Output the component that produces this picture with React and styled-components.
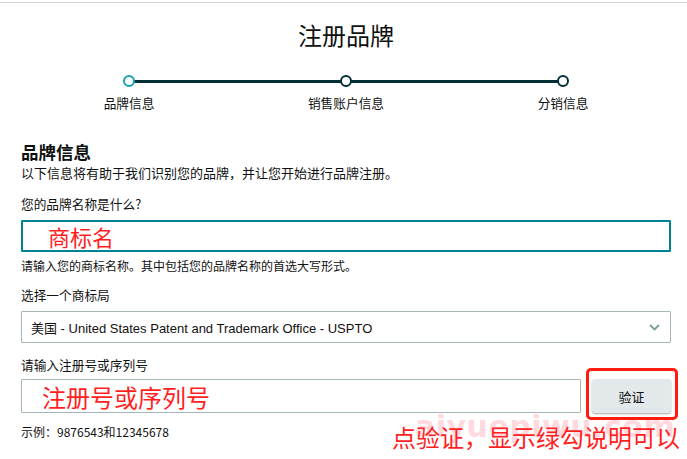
import React from 'react';
import styled, { createGlobalStyle } from 'styled-components';

const GlobalStyle = createGlobalStyle`
  body {
    margin: 0;
    background: #fff;
    font-family: "Liberation Sans", "Noto Sans CJK SC", sans-serif;
    color: #111;
  }
  * { box-sizing: border-box; }
`;

const Page = styled.div`
  margin-top: 2px;
  border-top: 1px solid #d5d5d5;
  padding: 16px 16px 0 21px;
  height: 457px;
  overflow: hidden;
`;

const Title = styled.h1`
  margin: 0;
  font-family: "Noto Sans CJK SC", sans-serif;
  font-weight: 400;
  font-size: 24px;
  line-height: 32px;
  text-align: center;
  color: #0f1111;
`;

const Stepper = styled.div`
  display: grid;
  grid-template-columns: repeat(3, 217px);
  justify-content: center;
  margin-top: 24px;
`;

const Track = styled.div`
  grid-row: 1;
  grid-column: 1 / 4;
  align-self: center;
  margin: 0 108.5px;
  height: 3px;
  background: #002f36;
`;

const Dot = styled.span`
  grid-row: 1;
  grid-column: ${p => p.$col};
  justify-self: center;
  z-index: 1;
  width: 12px;
  height: 12px;
  border-radius: 50%;
  background: #fff;
  border: 2px solid ${p => (p.$active ? '#17a2b3' : '#002f36')};
`;

const StepLabel = styled.span`
  grid-row: 2;
  grid-column: ${p => p.$col};
  justify-self: center;
  margin-top: 7px;
  font-family: "Noto Sans CJK SC", sans-serif;
  font-size: 12.7px;
  line-height: 18px;
  color: #0f1111;
`;

const Heading = styled.h2`
  margin: 28px 0 0;
  font-family: "Noto Sans CJK SC", sans-serif;
  font-weight: 700;
  font-size: 17.5px;
  line-height: 24px;
  color: #0f1111;
`;

const Text = styled.p`
  margin: ${p => p.$mt || 0}px 0 0;
  font-family: "Noto Sans CJK SC", sans-serif;
  font-size: ${p => p.$size || 12.7}px;
  line-height: 18px;
  color: #111;
`;

const Field = styled.input`
  display: block;
  width: 100%;
  margin-top: ${p => p.$mt}px;
  height: ${p => p.$h}px;
  border: ${p => (p.$focus ? '2px solid #008296' : '1px solid #a6b5b8')};
  border-radius: 1px;
  padding: 0 0 0 ${p => p.$pad}px;
  font-family: "Noto Sans CJK SC", sans-serif;
  font-size: ${p => p.$size}px;
  color: #ff1f1f;
  background: #fff;
  outline: none;
`;

const Select = styled.div`
  display: flex;
  align-items: center;
  justify-content: space-between;
  margin-top: 7px;
  height: 32px;
  border: 1px solid #a6b5b8;
  border-radius: 1px;
  padding: 0 10px 0 9px;
  font-size: 13px;
  color: #111;
  svg { display: block; }
`;

const InputRow = styled.div`
  display: flex;
  gap: 11px;
  margin-top: 5px;
  ${Field} { flex: 1; margin-top: 0; }
`;

const ButtonWrap = styled.div`
  position: relative;
  width: 79px;
`;

const Button = styled.button`
  width: 100%;
  height: 34px;
  border: none;
  border-radius: 3px;
  background: #e3e9ea;
  box-shadow: 0 1px 2px rgba(0, 0, 0, 0.35);
  font-family: "Noto Sans CJK SC", sans-serif;
  font-size: 13px;
  color: #0f1111;
`;

const Highlight = styled.span`
  position: absolute;
  left: -6px;
  right: -7px;
  top: -11px;
  bottom: -7px;
  border: 3.5px solid #ff1b10;
  border-radius: 5px;
  pointer-events: none;
`;

const Footer = styled.div`
  position: relative;
  display: flex;
  justify-content: space-between;
  align-items: flex-start;
  margin-top: 10px;
  margin-right: -9px;
`;

const Watermark = styled.span`
  position: absolute;
  left: 394px;
  top: -13px;
  font-family: "DejaVu Sans", sans-serif;
  font-weight: 700;
  font-size: 30px;
  line-height: 34px;
  letter-spacing: 0.5px;
  color: rgba(255, 120, 140, 0.3);
  pointer-events: none;
`;

const Note = styled.span`
  position: relative;
  z-index: 1;
  font-family: "Noto Sans CJK SC", sans-serif;
  font-size: 24px;
  line-height: 28px;
  color: #ff1f1f;
`;

const steps = ['品牌信息', '销售账户信息', '分销信息'];

export default function App() {
  return (
    <>
      <GlobalStyle />
      <Page>
        <Title>注册品牌</Title>

        <Stepper>
          <Track />
          {steps.map((s, i) => (
            <React.Fragment key={s}>
              <Dot $col={i + 1} $active={i === 0} />
              <StepLabel $col={i + 1}>{s}</StepLabel>
            </React.Fragment>
          ))}
        </Stepper>

        <Heading>品牌信息</Heading>
        <Text $size={13}>以下信息将有助于我们识别您的品牌，并让您开始进行品牌注册。</Text>

        <Text $mt={13}>您的品牌名称是什么?</Text>
        <Field $mt={7} $h={32} $focus $pad={25} $size={22} defaultValue="商标名" />
        <Text $mt={5} $size={12}>请输入您的商标名称。其中包括您的品牌名称的首选大写形式。</Text>

        <Text $mt={11}>选择一个商标局</Text>
        <Select>
          <span>美国 - United States Patent and Trademark Office - USPTO</span>
          <svg width="11" height="7" viewBox="0 0 11 7">
            <polyline points="1,1 5.5,5.5 10,1" fill="none" stroke="#7d9ca1" strokeWidth="1.8" />
          </svg>
        </Select>

        <Text $mt={13}>请输入注册号或序列号</Text>
        <InputRow>
          <Field $h={34} $pad={20} $size={24} defaultValue="注册号或序列号" />
          <ButtonWrap>
            <Button>验证</Button>
            <Highlight />
          </ButtonWrap>
        </InputRow>

        <Footer>
          <Text $size={12}>示例：9876543和12345678</Text>
          <Watermark>aiyuepiwu.com</Watermark>
          <Note>点验证，显示绿勾说明可以</Note>
        </Footer>
      </Page>
    </>
  );
}
